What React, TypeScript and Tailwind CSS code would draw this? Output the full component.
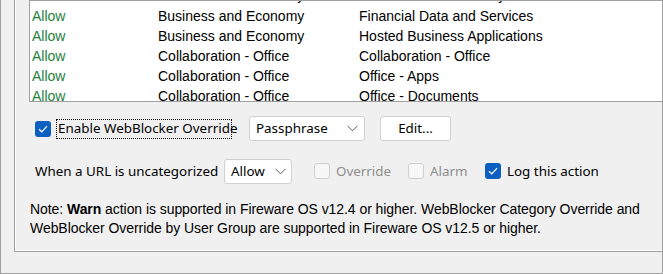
import React from 'react';

const rows = [
  ['Allow', 'Business and Economy', 'Financial Data and Services'],
  ['Allow', 'Business and Economy', 'Hosted Business Applications'],
  ['Allow', 'Collaboration - Office', 'Collaboration - Office'],
  ['Allow', 'Collaboration - Office', 'Office - Apps'],
  ['Allow', 'Collaboration - Office', 'Office - Documents'],
];

const Chevron = () => (
  <svg width="11" height="7" viewBox="0 0 11 7" className="shrink-0">
    <polyline points="0.5,0.8 5.5,5.8 10.5,0.8" fill="none" stroke="#5a5a5a" strokeWidth="1" />
  </svg>
);

function Check({ checked, disabled }: { checked?: boolean; disabled?: boolean }) {
  if (checked) {
    return (
      <span className="w-[16px] h-[16px] rounded-[3px] bg-[#0b5fc1] flex items-center justify-center shrink-0">
        <svg width="10" height="8" viewBox="0 0 10 8">
          <polyline points="1,4.2 3.8,6.8 9,1.2" fill="none" stroke="#ffffff" strokeWidth="1.2" />
        </svg>
      </span>
    );
  }
  return (
    <span
      className={
        disabled
          ? 'w-[16px] h-[16px] rounded-[3px] border border-[#cfcfcf] bg-[#f7f7f7] shrink-0'
          : 'w-[16px] h-[16px] rounded-[3px] border border-[#8a8a8a] bg-white shrink-0'
      }
    />
  );
}

function Row({ r }: { r: string[] }) {
  return (
    <div className="flex h-[20px] leading-[20px] text-[14px] text-black whitespace-nowrap">
      <span className="w-[126px] text-[#24803c]">{r[0]}</span>
      <span className="w-[201px]">{r[1]}</span>
      <span>{r[2]}</span>
    </div>
  );
}

export default function App() {
  return (
    <div
      className="w-[663px] h-[274px] bg-[#f0f0f0] border-l border-r border-b border-[#a0a0a0] overflow-hidden"
      style={{ fontFamily: '"Liberation Sans", Arial, sans-serif' }}
    >
      <div className="ml-[13px] w-[700px] h-[252px] border-l border-b border-[#a0a0a0]">
        <div className="h-full border-l border-b border-white pl-[13px]">
          {/* category list */}
          <div className="h-[102px] bg-white border-l border-t border-b border-[#a0a0a0] overflow-hidden">
            <div className="pl-[2px]">
              <div className="h-[5px] overflow-hidden">
                <div className="-mt-[16px]">
                  <Row r={['Allow', 'Business and Economy', 'Business and Economy']} />
                </div>
              </div>
              {rows.map((r, i) => (
                <Row key={i} r={r} />
              ))}
            </div>
          </div>

          <div
            className="pl-[6px] text-[13.4px] text-black"
            style={{ fontFamily: '"Noto Sans", "Open Sans", sans-serif' }}
          >
            <div className="mt-[14px] flex items-center h-[25px]">
              <Check checked />
              <span className="ml-[5px] w-[176px] h-[20px] border border-dotted border-black flex items-center pl-[1px] whitespace-nowrap leading-none">
                Enable WebBlocker Override
              </span>
              <div className="ml-[17px] w-[116px] h-[25px] bg-white border border-[#d0d0d0] rounded-[3px] flex items-center justify-between pl-[6px] pr-[6px]">
                <span>Passphrase</span>
                <Chevron />
              </div>
              <div className="ml-[15px] w-[71px] h-[25px] bg-white border border-[#d0d0d0] rounded-[3px] flex items-center justify-center">
                Edit...
              </div>
            </div>

            <div className="mt-[18px] flex items-center h-[25px]">
              <span className="w-[189px] whitespace-nowrap">When a URL is uncategorized</span>
              <div className="w-[68px] h-[25px] bg-white border border-[#d0d0d0] rounded-[3px] flex items-center justify-between pl-[6px] pr-[5px]">
                <span>Allow</span>
                <Chevron />
              </div>
              <div className="ml-[22px] w-[94px] flex items-center">
                <Check disabled />
                <span className="ml-[6px] text-[#8d8d8d]">Override</span>
              </div>
              <div className="w-[77px] flex items-center">
                <Check disabled />
                <span className="ml-[6px] text-[#8d8d8d]">Alarm</span>
              </div>
              <div className="flex items-center">
                <Check checked />
                <span className="ml-[6px]">Log this action</span>
              </div>
            </div>
          </div>

          <p className="mt-[16px] pl-[1px] text-[14px] leading-[19px] tracking-[-0.06px] text-black whitespace-nowrap">
            Note: <b>Warn</b> action is supported in Fireware OS v12.4 or higher. WebBlocker Category Override and
            <br />
            WebBlocker Override by User Group are supported in Fireware OS v12.5 or higher.
          </p>
        </div>
      </div>
    </div>
  );
}
